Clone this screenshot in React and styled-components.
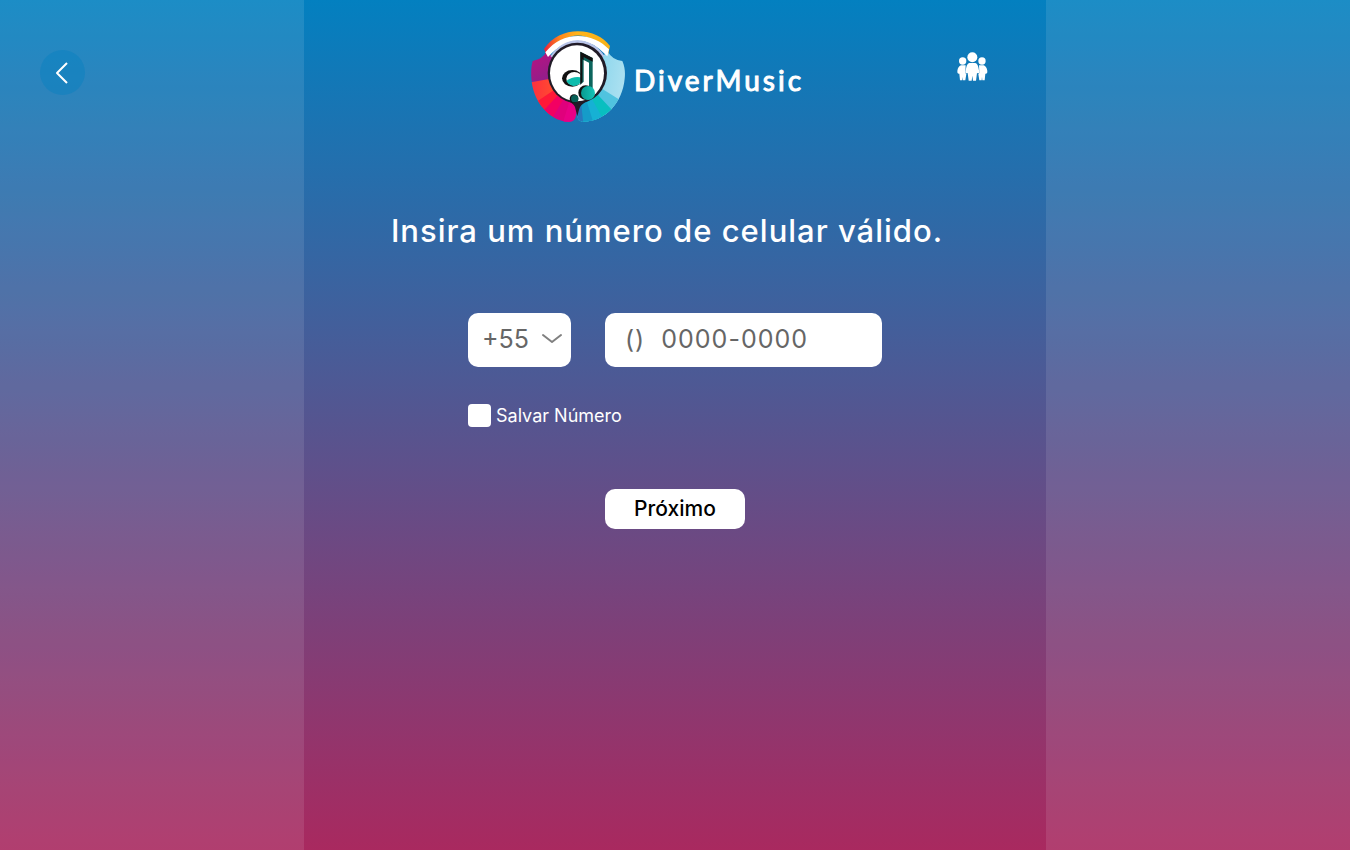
import React from "react";
import styled, { createGlobalStyle } from "styled-components";

const GlobalStyle = createGlobalStyle`
  *, *::before, *::after { box-sizing: border-box; }
  body {
    margin: 0;
    font-family: Inter, "Liberation Sans", sans-serif;
    color: #fff;
  }
`;

const Page = styled.div`
  display: grid;
  grid-template-columns: 1fr 55% 1fr;
  min-height: 100vh;
  background: linear-gradient(180deg, #0380c0 0%, #a9295f 100%);
`;

const Side = styled.aside`
  padding: 50px 40px;
  background: rgba(255, 255, 255, 0.1);
`;

const BackButton = styled.button`
  display: grid;
  place-items: center;
  width: 45px;
  height: 45px;
  padding: 0;
  border: 0;
  border-radius: 50%;
  background: rgba(3, 128, 192, 0.4);
  color: #fff;
  cursor: pointer;
`;

const Main = styled.main`
  display: flex;
  flex-direction: column;
  align-items: center;
`;

const Header = styled.header`
  display: grid;
  grid-template-columns: 1fr auto 1fr;
  width: 100%;
  padding: 31px 16px 0 0;
`;

const Brand = styled.a`
  grid-column: 2;
  display: flex;
  align-items: center;
  gap: 8px;
  color: inherit;
  text-decoration: none;
`;

const BrandName = styled.span`
  padding-top: 6px;
  font: 400 28px/36px Lato, sans-serif;
  letter-spacing: 3px;
  -webkit-text-stroke: 1px currentColor;
  stroke-linejoin: round;
`;

const GroupButton = styled.button`
  justify-self: end;
  align-self: start;
  display: flex;
  margin: 21px 42px 0 0;
  padding: 0;
  border: 0;
  background: none;
  color: #fff;
  cursor: pointer;
`;

const Title = styled.h1`
  margin: 88px 0 0;
  padding-right: 16px;
  font-size: 31px;
  line-height: 40px;
  font-weight: 500;
  letter-spacing: 1px;
`;

const Form = styled.form`
  display: flex;
  flex-direction: column;
  width: 414px;
  margin-top: 62px;
`;

const PhoneRow = styled.div`
  display: grid;
  grid-template-columns: 103px 1fr;
  gap: 34px;
`;

const SelectWrap = styled.div`
  position: relative;

  svg {
    position: absolute;
    top: 20px;
    right: 8px;
    pointer-events: none;
  }
`;

const Field = styled.input`
  width: 100%;
  height: 54px;
  padding: 0 20px 2px;
  border: 0;
  border-radius: 10px;
  background: #fff;
  color: #666;
  font: 400 25px/32px Inter, sans-serif;
  letter-spacing: 1px;
  appearance: none;

  &::placeholder {
    color: #666;
    opacity: 1;
  }
`;

const CodeSelect = styled(Field)`
  padding: 0 30px 2px 14px;
  letter-spacing: 0;
`;

const SaveLabel = styled.label`
  display: flex;
  align-items: center;
  align-self: flex-start;
  gap: 5px;
  margin-top: 37px;
  font-size: 18px;
  line-height: 23px;
`;

const Checkbox = styled.input`
  width: 23px;
  height: 23px;
  margin: 0;
  border-radius: 4px;
  background: #fff;
  appearance: none;

  &:checked {
    box-shadow: inset 0 0 0 5px #fff;
    background: #0380c0;
  }
`;

const NextButton = styled.button`
  align-self: center;
  width: 140px;
  height: 40px;
  margin-top: 62px;
  padding: 0;
  border: 0;
  border-radius: 10px;
  background: #fff;
  color: #000;
  font: 500 21px/40px Inter, sans-serif;
  cursor: pointer;
`;

function Logo() {
  return (
    <svg width="96" height="92" viewBox="30 32 288 276" aria-hidden="true">
      <defs>
        <clipPath id="leftWing">
          <path d="M78 95Q70 115 38 122C33 140 33 158 34 172C37 240 85 299 145 305Q166 306 168 285L176 255L176 160Z" />
        </clipPath>
        <clipPath id="rightWing">
          <path d="M264 95Q276 118 307 122C315 140 316 158 314 175C308 245 258 303 188 304Q172 303 172 288L172 160Z" />
        </clipPath>
        <linearGradient id="arc" x1="0" x2="1">
          <stop offset="0" stopColor="#e9203c" />
          <stop offset="0.25" stopColor="#ff8a1c" />
          <stop offset="0.5" stopColor="#ffb41a" />
          <stop offset="1" stopColor="#f7b21a" />
        </linearGradient>
        <linearGradient id="plum" x1="0" x2="1" y2="1">
          <stop offset="0" stopColor="#c4107e" />
          <stop offset="1" stopColor="#762590" />
        </linearGradient>
        <linearGradient id="ember" x1="0" x2="1">
          <stop offset="0" stopColor="#ff2940" />
          <stop offset="1" stopColor="#ff6b22" />
        </linearGradient>
        <linearGradient id="sky" x1="0" x2="1" y2="0.3">
          <stop offset="0" stopColor="#72cde9" />
          <stop offset="1" stopColor="#b0e2f1" />
        </linearGradient>
        <linearGradient id="teal" x1="0" x2="1">
          <stop offset="0" stopColor="#089a90" />
          <stop offset="1" stopColor="#14c4b8" />
        </linearGradient>
      </defs>
      <g clipPath="url(#leftWing)">
        <path d="M20 80H180V184H20Z" fill="url(#plum)" />
        <path d="M174 160L20 188V300L60 264Z" fill="url(#ember)" />
        <path d="M174 160L40 251V310H85Z" fill="#ff1838" />
        <path d="M174 160L66 276V310H110Z" fill="#f30062" />
        <path d="M174 160L94 299V320H136Z" fill="#e0007c" />
        <path d="M174 160L128 310H184V160Z" fill="#e80086" />
      </g>
      <g clipPath="url(#rightWing)">
        <path d="M172 90H330V320H172Z" fill="url(#sky)" />
        <path d="M174 160L300 239V320H174Z" fill="#50c3df" />
        <path d="M174 160L277 270V320H174Z" fill="#09bfc0" />
        <path d="M174 160L247 292V320H174Z" fill="#16b1d4" />
        <path d="M174 160L220 306V320H174Z" fill="#159cc9" />
        <path d="M174 160L190 310H165Z" fill="#2878bd" />
      </g>
      <path d="M72 86C97 50 134 33 174 33C216 33 249 50 270 77L264 102Q174 -12 80 105Z" fill="url(#arc)" />
      <path d="M76 96C104 62 136 48 174 47C213 48 243 62 267 87L262 108Q174 14 84 110Z" fill="#fff" />
      <path d="M91 108C112 77 139 61 172 60C207 61 234 77 253 106L242 114Q172 48 102 114Z" fill="#b9c4e8" />
      <path d="M144 242Q166 252 167 268L172 288L177 268Q180 252 204 242Z" fill="#211b27" />
      <ellipse cx="172" cy="158" rx="89" ry="91" fill="#211b27" />
      <ellipse cx="171" cy="159" rx="81" ry="84" fill="#fff" />
      <ellipse cx="157" cy="174" rx="31" ry="25" fill="#111" />
      <ellipse cx="163" cy="175" rx="24" ry="20" fill="#fff" />
      <path d="M139 182Q160 166 187 172Q182 197 160 197Q146 194 139 182Z" fill="#0ebcac" />
      <path d="M181 94L218 113V213L207 208V127L191 119V184L181 193Z" fill="#0c655d" />
      <path d="M181 94L218 113V124L191 110V119L187 117V184L181 193Z" fill="#111" />
      <circle cx="197" cy="217" r="22" fill="#111" />
      <circle cx="204" cy="218" r="21" fill="url(#teal)" />
      <circle cx="162" cy="235" r="13" fill="#111" />
      <circle cx="164" cy="235" r="11" fill="#075f56" />
    </svg>
  );
}

function GroupIcon() {
  return (
    <svg width="31" height="29" viewBox="50 34 93 87" fill="currentColor" aria-hidden="true">
      <circle cx="67" cy="61" r="11" />
      <circle cx="125" cy="61" r="11" />
      <path d="M62 74H76L75 97L78 100L75 119H68L67 109L66 119H59L57 99Q50 101 51 91Q53 77 62 74Z" />
      <path d="M130 74H116L117 97L114 100L117 119H124L125 109L126 119H133L135 99Q142 101 141 91Q139 77 130 74Z" />
      <circle cx="96" cy="50" r="15" />
      <path d="M87 67H105Q112 69 114 80L117 94Q117 100 110 97L107 120H98L96 105L94 120H85L82 97Q75 100 75 94L78 80Q80 69 87 67Z" />
    </svg>
  );
}

export default function App() {
  return (
    <>
      <GlobalStyle />
      <Page>
        <Side>
          <BackButton type="button" aria-label="Voltar">
            <svg width="15" height="24" viewBox="0 0 15 24" fill="none" stroke="currentColor" strokeWidth="2" strokeLinejoin="round">
              <path d="M12 2L2 12L12 22" />
            </svg>
          </BackButton>
        </Side>
        <Main>
          <Header>
            <Brand href="#">
              <Logo />
              <BrandName>DiverMusic</BrandName>
            </Brand>
            <GroupButton type="button" aria-label="Grupo">
              <GroupIcon />
            </GroupButton>
          </Header>
          <Title>Insira um número de celular válido.</Title>
          <Form onSubmit={(e) => e.preventDefault()}>
            <PhoneRow>
              <SelectWrap>
                <CodeSelect as="select" aria-label="Código do país" defaultValue="+55">
                  <option>+55</option>
                </CodeSelect>
                <svg width="22" height="12" viewBox="0 0 22 12" fill="none" stroke="#808080" strokeWidth="2" strokeLinecap="round" strokeLinejoin="round">
                  <path d="M2 2L11 9L20 2" />
                </svg>
              </SelectWrap>
              <Field type="tel" aria-label="Número de celular" placeholder="()  0000-0000" />
            </PhoneRow>
            <SaveLabel>
              <Checkbox type="checkbox" />
              Salvar Número
            </SaveLabel>
            <NextButton type="submit">Próximo</NextButton>
          </Form>
        </Main>
        <Side />
      </Page>
    </>
  );
}
